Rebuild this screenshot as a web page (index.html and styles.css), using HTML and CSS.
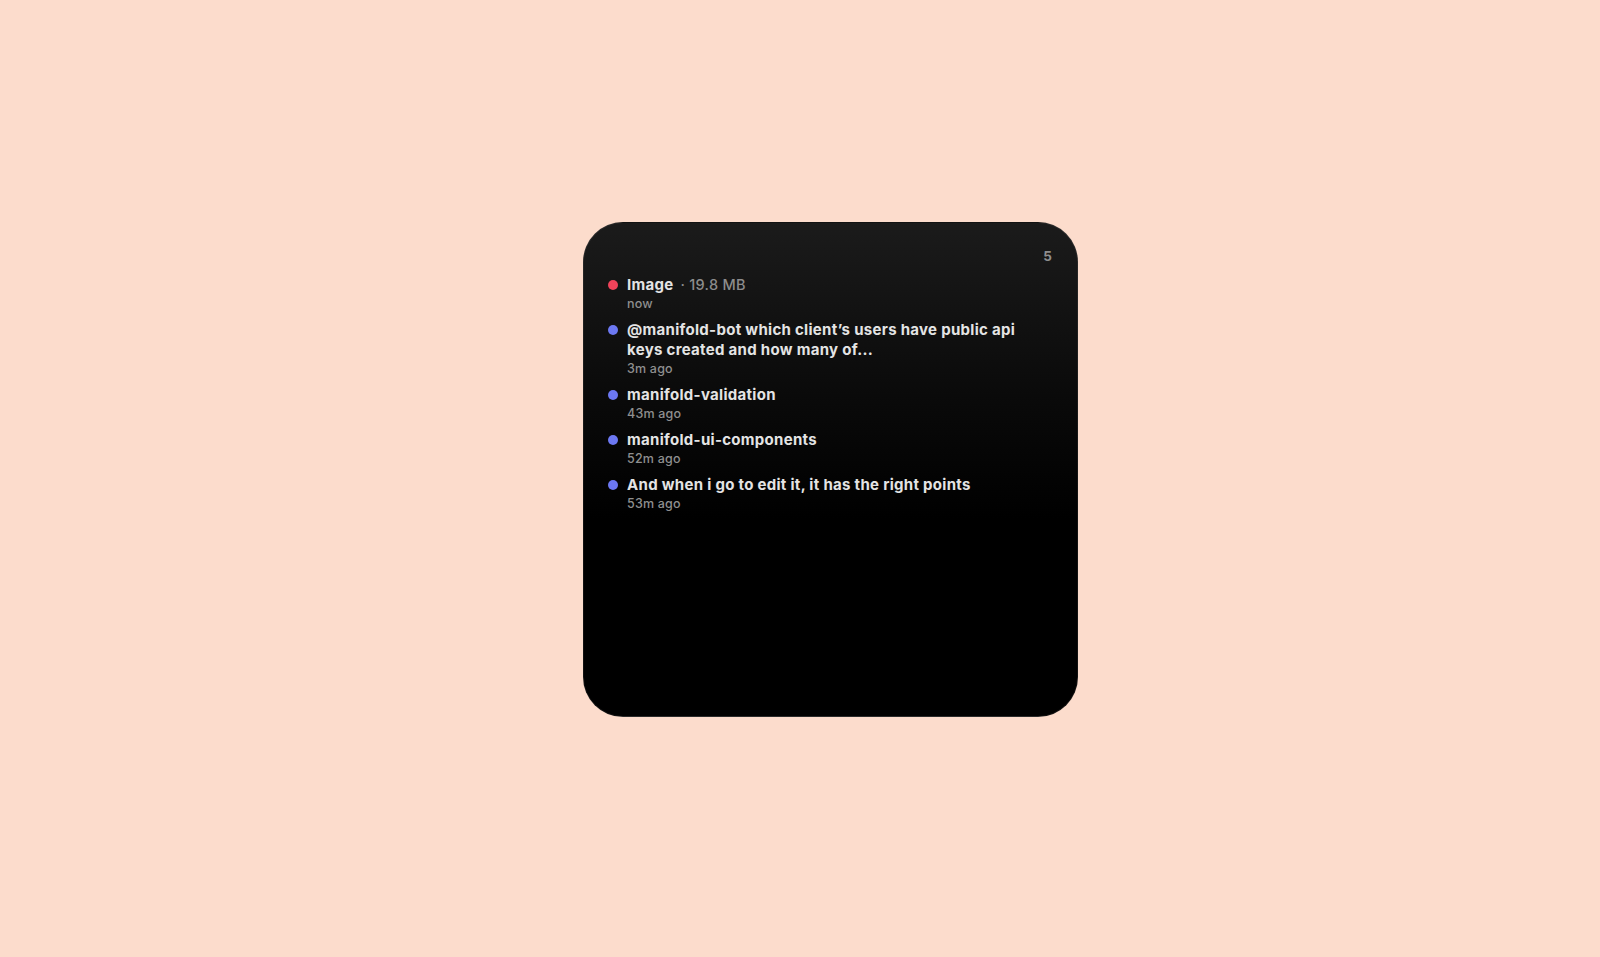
FILE: index.html
```html
<!DOCTYPE html>
<html>
<head>
<meta charset="utf-8">
<link rel="stylesheet" href="styles.css">
</head>
<body>
<div class="page">
  <div class="card">
    <div class="count">5</div>
    <ul class="list">
      <li class="item">
        <span class="dot red"></span>
        <div class="body">
          <div class="title">Image <span class="meta">· 19.8 MB</span></div>
          <div class="time">now</div>
        </div>
      </li>
      <li class="item">
        <span class="dot blue"></span>
        <div class="body">
          <div class="title">@manifold-bot which client’s users have public api keys created and how many of...</div>
          <div class="time">3m ago</div>
        </div>
      </li>
      <li class="item">
        <span class="dot blue"></span>
        <div class="body">
          <div class="title">manifold-validation</div>
          <div class="time">43m ago</div>
        </div>
      </li>
      <li class="item">
        <span class="dot blue"></span>
        <div class="body">
          <div class="title">manifold-ui-components</div>
          <div class="time">52m ago</div>
        </div>
      </li>
      <li class="item">
        <span class="dot blue"></span>
        <div class="body">
          <div class="title">And when i go to edit it, it has the right points</div>
          <div class="time">53m ago</div>
        </div>
      </li>
    </ul>
  </div>
</div>
</body>
</html>
```
FILE: styles.css
```css
html, body {
  margin: 0;
  padding: 0;
  background: #fcdccc;
  font-family: Inter, "Noto Sans", sans-serif;
}
.page {
  width: 1600px;
  height: 957px;
  box-sizing: border-box;
  padding: 222px 0 0 583px;
}
.card {
  width: 495px;
  height: 495px;
  box-sizing: border-box;
  border-radius: 40px;
  background: linear-gradient(180deg, #1b1b1b 0%, #0a0a0a 35%, #000 60%, #000 100%);
  border: 1px solid rgba(255,255,255,0.07);
  padding: 24px 25px 24px 24px;
  display: flex;
  flex-direction: column;
}
.count {
  align-self: flex-end;
  color: #8e8e8e;
  font-size: 13.5px;
  font-weight: 700;
  line-height: 18px;
  margin-bottom: 10px;
}
.list {
  list-style: none;
  margin: 0;
  padding: 0;
  display: flex;
  flex-direction: column;
  gap: 8px;
}
.item {
  display: flex;
  align-items: flex-start;
  gap: 9px;
}
.dot {
  flex: none;
  width: 10px;
  height: 10px;
  border-radius: 50%;
  margin-top: 5px;
}
.dot.red { background: #f0435a; }
.dot.blue { background: #6c78f2; }
.body {
  display: flex;
  flex-direction: column;
  max-width: 405px;
}
.title {
  color: #e4e4e4;
  font-size: 15px;
  font-weight: 650;
  line-height: 20px;
  letter-spacing: 0.3px;
}
.meta {
  color: #8c8c8c;
  font-weight: 450;
  font-size: 14.5px;
  margin-left: 3px;
  letter-spacing: 0.3px;
}
.time {
  color: #8f8f8f;
  font-size: 12.5px;
  font-weight: 550;
  line-height: 17px;
  letter-spacing: 0.2px;
}
```
